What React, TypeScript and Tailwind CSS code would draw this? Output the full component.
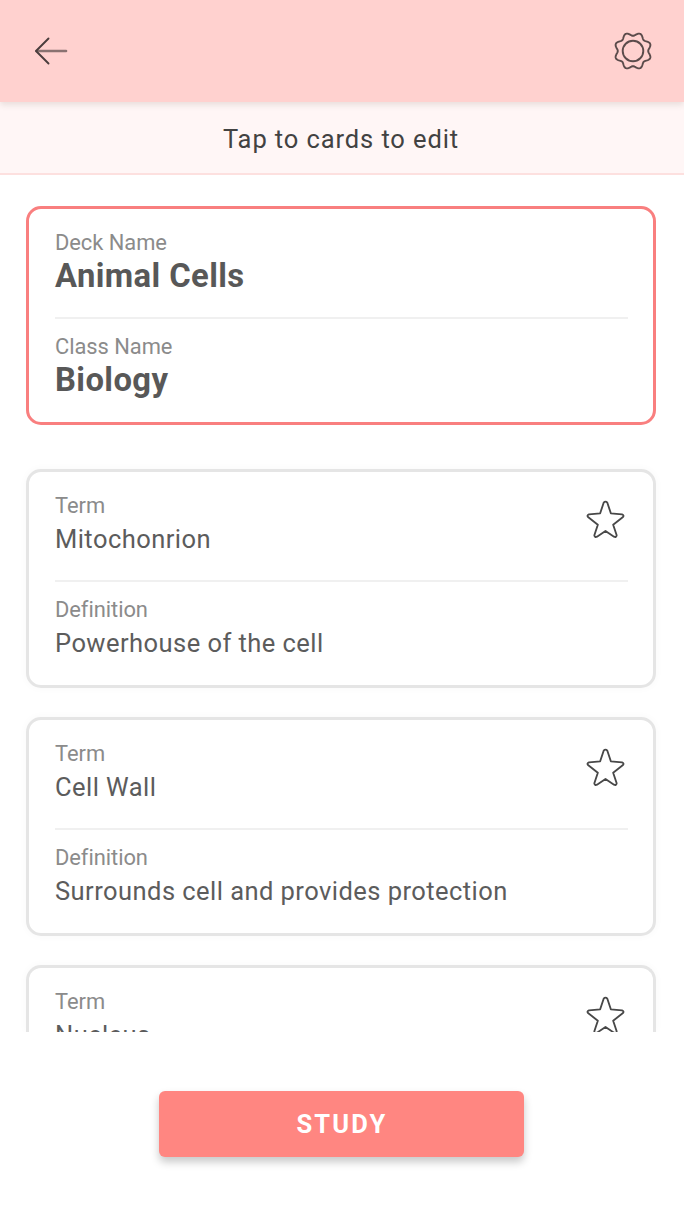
const GEAR_PATH =
  Array.from({ length: 160 }, (_, i) => {
    const a = (i / 160) * Math.PI * 2;
    const r = 16.9 - 1.7 * Math.cos(8 * a);
    return `${i === 0 ? 'M' : 'L'}${(20 + r * Math.cos(a)).toFixed(2)} ${(20 + r * Math.sin(a)).toFixed(2)}`;
  }).join('') + 'Z';

function BackArrow() {
  return (
    <svg width="36" height="30" viewBox="0 0 36 30" fill="none" strokeLinecap="round" strokeLinejoin="round">
      <path d="M4.500 15H34" stroke="#3b3232" strokeOpacity="0.6" strokeWidth="2.6" />
      <path d="M16.500 2.500L4 15L16.500 27.500" stroke="#4a3d3d" strokeWidth="1.9" />
    </svg>
  );
}

function Gear() {
  return (
    <svg width="40" height="40" viewBox="0 0 40 40" fill="none" stroke="#5b4b4b" strokeWidth="1.9">
      <path d={GEAR_PATH} strokeLinejoin="round" />
      <circle cx="20" cy="20" r="10.3" />
    </svg>
  );
}

function Star() {
  return (
    <svg width="40" height="40" viewBox="0 0 120 120" fill="none" stroke="#484848" strokeWidth="5.5" strokeLinejoin="round">
      <path d="M53 8Q58.500 2 64 8L74.500 40L108 43Q115 46 111 51L81.500 74L92 106Q91 113 84 110L58.500 93L33 110Q26 113 25 106L35.500 74L6 51Q2 46 9 43L42.500 40Z" />
    </svg>
  );
}

type Field = { label: string; value: string };

function Card({ fields, deck = false }: { fields: [Field, Field]; deck?: boolean }) {
  return (
    <section
      className={`relative h-[219px] shrink-0 rounded-[15px] border-[3px] bg-white pr-[25px] pl-[26px] ${
        deck ? 'border-[#f97f7f]' : 'border-[#e5e5e5] shadow-[0_0_8px_rgba(0,0,0,0.03)]'
      }`}
    >
      {fields.map((field, i) => (
        <div key={field.label} className={i === 0 ? 'h-[110px] border-b-2 border-[#f0f0f0] pt-[21px]' : 'pt-[15px]'}>
          <div className="text-[21.9px] leading-[26px] tracking-[-0.05px] text-[#8b8b8b]">{field.label}</div>
          <div
            className={
              deck
                ? 'pt-px text-[32.8px] leading-[38px] font-bold tracking-[0.4px] text-[#585858]'
                : 'pt-px text-[25.5px] leading-[38px] tracking-[0.45px] text-[#5c5c5c]'
            }
          >
            {field.value}
          </div>
        </div>
      ))}
      {!deck && (
        <button className="absolute top-[28px] right-[27px]" aria-label="Star">
          <Star />
        </button>
      )}
    </section>
  );
}

const CARDS = [
  { term: 'Mitochonrion', definition: 'Powerhouse of the cell' },
  { term: 'Cell Wall', definition: 'Surrounds cell and provides protection' },
];

export default function App() {
  return (
    <div className="flex h-[1217px] w-[684px] flex-col overflow-hidden bg-white font-['Roboto',sans-serif]">
      <header className="z-10 flex h-[102px] shrink-0 items-center justify-between bg-[#ffd1cf] pr-[31px] pl-[32px] shadow-[0_3px_6px_rgba(70,60,40,0.12)]">
        <button aria-label="Back">
          <BackArrow />
        </button>
        <button aria-label="Settings">
          <Gear />
        </button>
      </header>
      <div className="flex h-[73px] shrink-0 items-center justify-center border-b-2 border-[#fde0df] bg-[#fff6f6] pt-[4px] pr-[2px] text-[25.5px] tracking-[0.9px] text-[#424242]">
        Tap to cards to edit
      </div>
      <main className="flex h-[857px] shrink-0 flex-col overflow-hidden pt-[31px] pr-[28px] pl-[26px]">
        <Card
          deck
          fields={[
            { label: 'Deck Name', value: 'Animal Cells' },
            { label: 'Class Name', value: 'Biology' },
          ]}
        />
        <div className="flex flex-col gap-[29px] pt-[44px]">
          {CARDS.map((card) => (
            <Card
              key={card.term}
              fields={[
                { label: 'Term', value: card.term },
                { label: 'Definition', value: card.definition },
              ]}
            />
          ))}
          <section className="relative h-[67px] shrink-0 overflow-hidden rounded-t-[15px] border-x-[3px] border-t-[3px] border-[#e5e5e5] bg-white px-[26px] pt-[21px] shadow-[0_0_8px_rgba(0,0,0,0.03)]">
            <div className="text-[21.9px] leading-[26px] tracking-[-0.05px] text-[#8b8b8b]">Term</div>
            <div className="pt-px text-[25.5px] leading-[38px] tracking-[0.45px] text-[#5c5c5c]">Nucleus</div>
            <button className="absolute top-[28px] right-[27px]" aria-label="Star">
              <Star />
            </button>
          </section>
        </div>
      </main>
      <footer className="flex justify-center pt-[59px]">
        <button className="mr-[2px] h-[66px] w-[365px] rounded-[6px] bg-[#ff8681] pl-[2px] text-[25.5px] font-bold tracking-[2.2px] text-white shadow-[0_5px_8px_rgba(0,0,0,0.22)]">
          STUDY
        </button>
      </footer>
    </div>
  );
}
